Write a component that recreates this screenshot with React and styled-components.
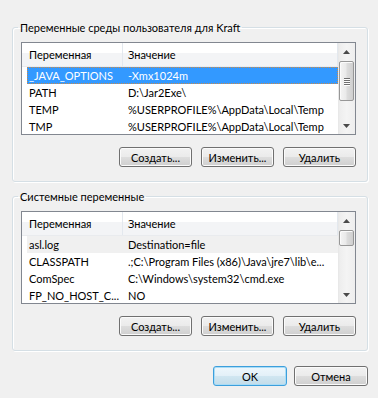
import React from "react";
import styled, { createGlobalStyle } from "styled-components";

const GlobalStyle = createGlobalStyle`
  html, body {
    margin: 0;
    background: #f0f0f0;
  }
  body {
    font-family: Lato, "Noto Sans", "Liberation Sans", sans-serif;
    font-size: 11px;
    color: #000;
  }
`;

const userVars = [
  ["_JAVA_OPTIONS", "-Xmx1024m"],
  ["PATH", "D:\\Jar2Exe\\"],
  ["TEMP", "%USERPROFILE%\\AppData\\Local\\Temp"],
  ["TMP", "%USERPROFILE%\\AppData\\Local\\Temp"],
];

const systemVars = [
  ["asl.log", "Destination=file"],
  ["CLASSPATH", ".;C:\\Program Files (x86)\\Java\\jre7\\lib\\e..."],
  ["ComSpec", "C:\\Windows\\system32\\cmd.exe"],
  ["FP_NO_HOST_C...", "NO"],
];

const Dialog = styled.div`
  width: 378px;
  height: 398px;
  box-sizing: border-box;
  padding: 20px 10px 0 12px;
  display: flex;
  flex-direction: column;
`;

const Group = styled.fieldset`
  box-sizing: border-box;
  width: 356px;
  min-width: 0;
  margin: ${(p) => p.$top || 0}px 0 0;
  padding: 7px 11px 14px 8px;
  border: 1px solid #d5dfe5;
  border-radius: 3px;
  box-shadow: inset 1px 1px 0 #fff, 1px 1px 0 #fff;
`;

const Legend = styled.legend`
  margin-left: -3px;
  padding: 0 2px;
  line-height: 15px;
`;

const List = styled.div`
  box-sizing: border-box;
  height: 93px;
  display: flex;
  border: 1px solid #828790;
  background: #fff;
`;

const ListBody = styled.div`
  flex: 1;
  min-width: 0;
  overflow: hidden;
`;

const Header = styled.div`
  box-sizing: border-box;
  height: 24px;
  display: flex;
  background: linear-gradient(#fff 0, #fff 45%, #f3f4f6 45%, #f3f4f6 100%);
  border-bottom: 1px solid #e9ebee;
`;

const HeaderCell = styled.div`
  box-sizing: border-box;
  width: ${(p) => (p.$w ? `${p.$w}px` : "auto")};
  flex: ${(p) => (p.$w ? "none" : 1)};
  padding-left: ${(p) => p.$pad}px;
  line-height: 23px;
  border-right: 1px solid #e3e8ee;
`;

const Row = styled.div`
  box-sizing: border-box;
  height: 17px;
  margin-left: 5px;
  display: flex;
  align-items: center;
  white-space: nowrap;
  background: ${(p) =>
    p.$active ? "#3399ff" : p.$inactive ? "#f0f0f0" : "transparent"};
  color: ${(p) => (p.$active ? "#fff" : "#000")};
  outline: ${(p) => (p.$active ? "1px dotted #c98a4b" : "none")};
  outline-offset: -1px;
`;

const Cell = styled.div`
  box-sizing: border-box;
  width: ${(p) => (p.$w ? `${p.$w}px` : "auto")};
  flex: ${(p) => (p.$w ? "none" : 1)};
  padding-left: ${(p) => p.$pad}px;
  overflow: hidden;
  line-height: 17px;
`;

const ScrollBar = styled.div`
  width: 17px;
  flex: none;
  display: flex;
  flex-direction: column;
  align-items: center;
  background: linear-gradient(to right, #e6e6e6 0, #eeeeee 2px, #f4f4f4 50%, #eeeeee 100%);
`;

const Arrow = styled.div`
  height: 17px;
  width: 17px;
  display: flex;
  align-items: center;
  justify-content: center;
  margin-top: ${(p) => (p.$down ? "auto" : 0)};
`;

const Thumb = styled.div`
  box-sizing: border-box;
  width: 15px;
  height: ${(p) => p.$h}px;
  margin-top: 1px;
  border: 1px solid #979797;
  border-radius: 2px;
  background: linear-gradient(to right, #f4f4f4 0, #eaeaea 45%, #dcdcdc 55%, #cfcfcf 100%);
  box-shadow: inset 1px 1px 0 #fbfbfb;
  display: flex;
  flex-direction: column;
  align-items: center;
  justify-content: center;
  gap: 1px;
`;

const Grip = styled.span`
  width: 6px;
  height: 1px;
  background: #6f6f6f;
  box-shadow: 0 1px 0 #fdfdfd;
`;

const ButtonRow = styled.div`
  display: flex;
  justify-content: flex-end;
  gap: ${(p) => p.$gap}px;
  margin-top: ${(p) => p.$top}px;
`;

const Button = styled.button`
  box-sizing: border-box;
  width: ${(p) => p.$w || 73}px;
  height: 20px;
  padding: 0;
  font: inherit;
  font-size: 11px;
  color: #000;
  border: 1px solid ${(p) => (p.$default ? "#3c9fdc" : "#707070")};
  border-radius: 3px;
  background: ${(p) =>
    p.$default
      ? "linear-gradient(#eef7fc 0, #e3f0f8 48%, #d0e6f1 52%, #c3dce9 100%)"
      : "linear-gradient(#f2f2f2 0, #ebebeb 48%, #dddddd 52%, #cfcfcf 100%)"};
  box-shadow: inset 0 0 0 1px ${(p) => (p.$default ? "#a9dcf6" : "#fbfbfb")};
`;

const TriangleUp = () => (
  <svg width="7" height="4" viewBox="0 0 7 4">
    <path d="M0 4 L3.5 0 L7 4 Z" fill="#4a4a4a" />
  </svg>
);

const TriangleDown = () => (
  <svg width="7" height="4" viewBox="0 0 7 4">
    <path d="M0 0 L7 0 L3.5 4 Z" fill="#4a4a4a" />
  </svg>
);

const VarList = ({ rows, active, inactive, thumb }) => (
  <List>
    <ListBody>
      <Header>
        <HeaderCell $w={101} $pad={7}>Переменная</HeaderCell>
        <HeaderCell $pad={5}>Значение</HeaderCell>
      </Header>
      {rows.map(([name, value], i) => (
        <Row key={name} $active={i === active} $inactive={i === inactive}>
          <Cell $w={96} $pad={2}>{name}</Cell>
          <Cell $pad={5}>{value}</Cell>
        </Row>
      ))}
    </ListBody>
    <ScrollBar>
      <Arrow>
        <TriangleUp />
      </Arrow>
      <Thumb $h={thumb}>
        {thumb > 30 && (
          <>
            <Grip />
            <Grip />
            <Grip />
            <Grip />
          </>
        )}
      </Thumb>
      <Arrow $down>
        <TriangleDown />
      </Arrow>
    </ScrollBar>
  </List>
);

const Actions = () => (
  <ButtonRow $gap={9} $top={12}>
    <Button>Создать...</Button>
    <Button>Изменить...</Button>
    <Button>Удалить</Button>
  </ButtonRow>
);

export default function App() {
  return (
    <>
      <GlobalStyle />
      <Dialog>
        <Group>
          <Legend>Переменные среды пользователя для Kraft</Legend>
          <VarList rows={userVars} active={0} thumb={40} />
          <Actions />
        </Group>
        <Group $top={7}>
          <Legend>Системные переменные</Legend>
          <VarList rows={systemVars} inactive={0} thumb={16} />
          <Actions />
        </Group>
        <ButtonRow $gap={7} $top={15}>
          <Button $w={74} $default>
            OK
          </Button>
          <Button $w={74}>Отмена</Button>
        </ButtonRow>
      </Dialog>
    </>
  );
}
